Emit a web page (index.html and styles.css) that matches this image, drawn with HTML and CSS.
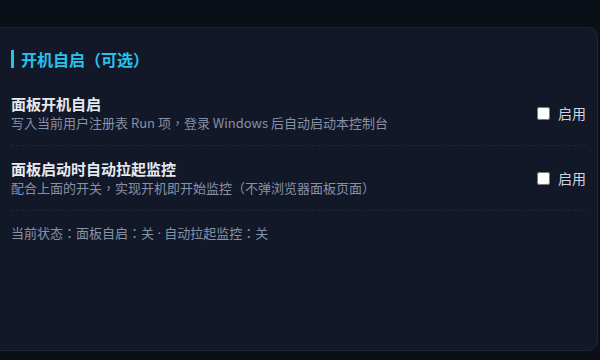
FILE: index.html
```html
<!DOCTYPE html>
<html lang="zh-TW">
<head>
    <meta charset="UTF-8">
    <meta name="viewport" content="width=device-width, initial-scale=1.0">
    <title>开机自启</title>
    <link rel="stylesheet" href="styles.css">
</head>
<body>
    <div class="panel">
        <h3 class="section-title">开机自启（可选）</h3>

        <!-- Panel autostart -->
        <div class="option-row">
            <div class="option-text">
                <div class="option-name">面板开机自启</div>
                <div class="option-desc">写入当前用户注册表 Run 项，登录 Windows 后自动启动本控制台</div>
            </div>
            <label class="toggle">
                <input type="checkbox" id="panel-autostart" onchange="updateStatus()">
                <span>启用</span>
            </label>
        </div>

        <!-- Monitor autostart -->
        <div class="option-row">
            <div class="option-text">
                <div class="option-name">面板启动时自动拉起监控</div>
                <div class="option-desc">配合上面的开关，实现开机即开始监控（不弹浏览器面板页面）</div>
            </div>
            <label class="toggle">
                <input type="checkbox" id="monitor-autostart" onchange="updateStatus()">
                <span>启用</span>
            </label>
        </div>

        <div id="status" class="status">当前状态：面板自启：关 · 自动拉起监控：关</div>
    </div>

    <script>
        function updateStatus() {
            const panel = document.getElementById('panel-autostart').checked ? '开' : '关';
            const monitor = document.getElementById('monitor-autostart').checked ? '开' : '关';
            document.getElementById('status').textContent =
                '当前状态：面板自启：' + panel + ' · 自动拉起监控：' + monitor;
        }
    </script>
</body>
</html>
```

FILE: styles.css
```css
/* Page */
body {
    margin: 0;
    background-color: #0b0f17;
    font-family: "Noto Sans CJK TC", "Noto Sans", sans-serif;
    color: #e4e8ef;
    text-spacing-trim: space-all;
}

.panel {
    box-sizing: border-box;
    height: 324px;
    margin: 27px 2px 0 -10px;
    padding: 20px 11px 0 20px;
    background-color: #121828;
    border: 1px solid #1d2539;
    border-radius: 10px;
}

/* Section heading */
.section-title {
    display: flex;
    align-items: center;
    height: 18px;
    margin: 2px 0 13px 0;
    padding-left: 7px;
    border-left: 3px solid #27c3ec;
    color: #27c3ec;
    font-size: 16px;
    font-weight: bold;
    line-height: 22px;
}

/* Option rows */
.option-row {
    display: flex;
    align-items: center;
    justify-content: space-between;
    padding: 13px 0;
    border-bottom: 1px dashed #1f273a;
}

.option-name {
    font-size: 15px;
    font-weight: bold;
    line-height: 20px;
    color: #e6e9ef;
}

.option-desc {
    font-size: 13px;
    line-height: 18px;
    color: #8690a6;
}

.toggle {
    display: flex;
    align-items: center;
    gap: 8px;
    font-size: 14px;
    color: #cdd5e2;
    cursor: pointer;
}

.toggle input {
    margin: 0;
    width: 13px;
    height: 13px;
}

/* narrow middle dot comes from the latin font */
.status {
    margin-top: 13px;
    font-family: "Noto Sans", "Noto Sans CJK TC", sans-serif;
    font-size: 13px;
    line-height: 18px;
    color: #8690a6;
}
```
